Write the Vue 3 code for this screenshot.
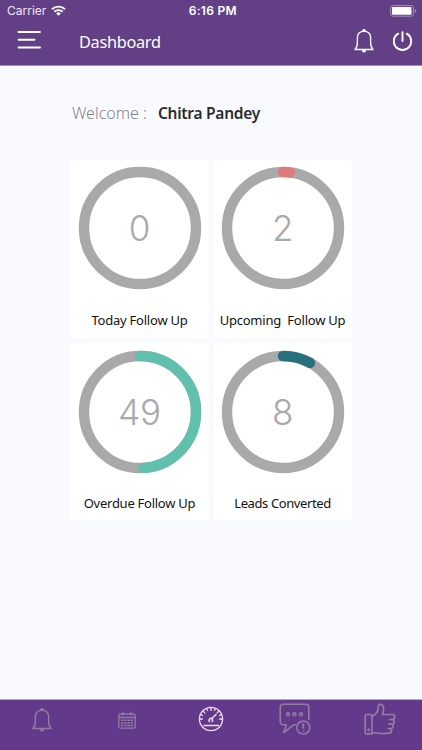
<template>
  <div class="screen">
    <header class="header">
      <div class="status-bar">
        <div class="carrier">
          <span class="carrier-name">Carrier</span>
          <svg class="wifi" width="15" height="11" viewBox="0 0 15 11">
            <path d="M1 4.2a9.4 9.4 0 0 1 13 0M3.4 6.7a6 6 0 0 1 8.2 0" fill="none" stroke="#fff" stroke-width="1.9" />
            <path d="M5.2 8.4a3.4 3.4 0 0 1 4.6 0L7.5 10.8z" fill="#fff" />
          </svg>
        </div>
        <span class="time">6:16 PM</span>
        <svg class="battery" width="27" height="12" viewBox="0 0 27 12">
          <rect x="0.6" y="0.6" width="22.8" height="10.6" rx="2.4" fill="none" stroke="#a58fbd" stroke-width="1" />
          <rect x="2" y="2" width="19.5" height="7.8" rx="1" fill="#fff" />
          <path d="M24.8 4v4q1.600-.6 1.600-2t-1.600-2z" fill="#a58fbd" />
        </svg>
      </div>
      <div class="nav-bar">
        <svg class="menu" width="24" height="20" viewBox="0 0 24 20">
          <path d="M1.500 2h21.500M1.500 9.800h16M1.500 17.500h21.500" stroke="#fff" stroke-width="1.900" stroke-linecap="round" />
        </svg>
        <h1>Dashboard</h1>
        <svg class="bell" width="20" height="25" viewBox="0 0 20 25">
          <path :d="bellPath" fill="none" stroke="#fff" stroke-width="1.3" stroke-linejoin="round" />
          <path :d="bellEnds" fill="#fff" />
        </svg>
        <svg class="power" width="20" height="20" viewBox="0 0 20 20">
          <path d="M5.200 2.700A8.700 8.700 0 1 0 13.800 2.700M9.500 1.100v9" fill="none" stroke="#fff" stroke-width="1.900" stroke-linecap="round" />
        </svg>
      </div>
    </header>

    <main class="content">
      <p class="welcome">
        <span class="greeting">Welcome :</span>
        <span class="user">Chitra Pandey</span>
      </p>
      <div class="cards">
        <div v-for="card in cards" :key="card.label" class="card">
          <div class="gauge">
            <svg width="124" height="124" viewBox="0 0 124 124">
              <circle cx="62" cy="62" r="56" fill="none" stroke="#a9a9a9" stroke-width="10.400" />
              <circle
                v-if="card.value > 0"
                cx="62"
                cy="62"
                r="56"
                fill="none"
                :stroke="card.color"
                stroke-width="10.400"
                stroke-linecap="round"
                pathLength="100"
                :stroke-dasharray="card.value + ' 100'"
                transform="rotate(-90 62 62)"
              />
            </svg>
            <span class="value">{{ card.value }}</span>
          </div>
          <span class="label" :class="card.size">{{ card.label }}</span>
        </div>
      </div>
    </main>

    <nav class="tab-bar">
      <a class="tab">
        <svg class="tab-bell" width="20" height="25" viewBox="0 0 20 25">
          <path :d="bellPath" fill="none" stroke="currentColor" stroke-width="1.4" stroke-linejoin="round" />
          <path :d="bellEnds" fill="currentColor" />
        </svg>
      </a>
      <a class="tab">
        <svg class="tab-calendar" width="18" height="18" viewBox="0 0 18 18">
          <g fill="none" stroke="currentColor" stroke-width="1.3">
            <rect x="0.800" y="3" width="16.400" height="14.200" rx="2" />
            <path d="M1 6.500h16M5 .5v4M13 .5v4" />
            <path d="M3 9.200h12M3 11.900h12M3 14.600h12" stroke-width="1.500" stroke-dasharray="2.400 .8" />
          </g>
        </svg>
      </a>
      <a class="tab active">
        <svg class="tab-gauge" width="26" height="26" viewBox="0 0 26 26">
          <g fill="none" stroke="currentColor" stroke-width="1.300" stroke-linecap="round">
            <circle cx="13" cy="13" r="11.600" />
            <path d="M6 19.500h14.500M1.800 13h2.600M21.600 13h2.600M13 1.800v2.600M5.100 5.100l1.700 1.700M20.900 5.100l-1.700 1.700M2.700 8.700l1.800.8M23.300 8.700l-1.800.8M8.700 2.700l.7 1.600M17.300 2.700l-.7 1.600" />
            <path d="M11.500 15.500a1.800 1.800 0 1 1 2.600 0M14 12.600l4-4.200" stroke-width="1.500" />
          </g>
        </svg>
      </a>
      <a class="tab">
        <svg class="tab-chat" width="32" height="32" viewBox="0 0 32 32">
          <g fill="none" stroke="currentColor" stroke-width="1.600" stroke-linejoin="round">
            <path d="M17 21.700h-2L4.800 29.500l2.500-7.800H4.500a3.300 3.300 0 0 1-3.300-3.300V4.500a3.300 3.300 0 0 1 3.300-3.300h22a3.300 3.300 0 0 1 3.300 3.300v12.500" />
            <circle cx="9" cy="11.300" r="1.500" />
            <circle cx="15.500" cy="11.300" r="1.500" />
            <circle cx="22" cy="11.300" r="1.500" />
            <circle cx="24.300" cy="24.500" r="6.500" />
            <path d="M24.300 20.300v5.200M24.300 27.200v1.400" stroke-width="1.700" />
          </g>
        </svg>
      </a>
      <a class="tab">
        <svg class="tab-like" width="32" height="32" viewBox="0 0 32 32">
          <g fill="none" stroke="currentColor" stroke-width="1.700" stroke-linejoin="round" stroke-linecap="round">
            <path d="M2.500 11.500h4.300q1.200 0 1.200 1.200v18.100H2.500q-1.300 0-1.300-1.300V12.800q0-1.300 1.300-1.300z" />
            <path d="M8 13.500c4-2 6.200-5.200 6.200-8.500V3.500c0-3 4.500-3 5.200.5.500 2.500 0 5-.9 7.500h9.700c3.400 0 3.400 4.700.3 5 2.500.7 2.200 4.500-.7 4.700 2 .8 1.700 4.300-.9 4.500 1.300 1.500.6 4.300-1.600 4.500-5 .6-11.300.4-17.300-.7" />
            <path d="M25.500 16.500h3M25 21.200h2.800M24.500 25.700h2.400" />
            <circle cx="4.700" cy="27" r="0.600" />
          </g>
        </svg>
      </a>
    </nav>
  </div>
</template>

<script setup>
const bellPath = 'M1 21.500C3 19.500 3.400 17.500 3.400 14V9.800C3.400 5.800 6 3.400 10 3.400S16.600 5.800 16.600 9.800V14C16.600 17.500 17 19.500 19 21.500Z'
const bellEnds = 'M7.800 3.600a2.200 2.500 0 1 1 4.400 0zM7.700 22.300h4.600q-.4 2.200-2.300 2.200t-2.300-2.200z'

const cards = [
  { value: 0, label: 'Today Follow Up', color: '#a9a9a9', size: 'today' },
  { value: 2, label: 'Upcoming  Follow Up', color: '#dc7b7e', size: 'upcoming' },
  { value: 49, label: 'Overdue Follow Up', color: '#61bfae', size: 'overdue' },
  { value: 8, label: 'Leads Converted', color: '#27717e', size: 'leads' }
]
</script>

<style>
body {
  margin: 0;
}
</style>

<style scoped>
.screen {
  width: 422px;
  height: 750px;
  display: flex;
  flex-direction: column;
  overflow: hidden;
  background: #f9faff;
  font-family: "Noto Sans", "Open Sans", sans-serif;
}

svg {
  display: block;
  flex-shrink: 0;
}

.header {
  box-sizing: border-box;
  height: 66px;
  background: #634086;
  border-bottom: 1px solid #a48dbd;
  color: #fff;
}

.status-bar {
  display: grid;
  grid-template-columns: 1fr auto 1fr;
  align-items: center;
  height: 21px;
  padding: 0 5px 0 7px;
  font-family: Inter, sans-serif;
  font-size: 12px;
}

.carrier {
  display: flex;
  align-items: center;
  gap: 4.5px;
}

.carrier-name {
  color: #eee8f4;
}

.time {
  padding-left: 1.5px;
  font-weight: 600;
  letter-spacing: 0.3px;
}

.battery {
  justify-self: end;
}

.nav-bar {
  display: flex;
  align-items: center;
  height: 38px;
  padding: 0 9px 0 17px;
}

.nav-bar h1 {
  flex: 1;
  margin: 3px 0 0 38px;
  font-size: 16.3px;
  font-weight: 400;
  letter-spacing: -0.3px;
}

.power {
  margin: 1px 0 0 19px;
}

.content {
  flex: 1;
  padding: 35px 70px 0;
}

.welcome {
  display: flex;
  align-items: center;
  gap: 11px;
  height: 24px;
  margin: 0 0 34px 2px;
  font-size: 16px;
  white-space: nowrap;
}

.greeting {
  color: #858589;
  font-weight: 300;
}

.user {
  color: #2b2b2e;
  font-size: 15.5px;
  font-weight: 600;
  letter-spacing: -0.26px;
}

.cards {
  display: grid;
  grid-template-columns: 138px 138px;
  column-gap: 5px;
  row-gap: 5px;
  padding-left: 0.5px;
}

.card {
  box-sizing: border-box;
  display: flex;
  flex-direction: column;
  align-items: center;
  height: 178.5px;
  padding-top: 7px;
  background: #fff;
}

.gauge {
  display: grid;
  place-items: center;
}

.gauge > * {
  grid-area: 1 / 1;
}

.value {
  color: #a9a9a9;
  font-family: Inter, sans-serif;
  font-size: 35px;
  font-weight: 300;
  letter-spacing: -0.3px;
}

.label {
  margin-top: 20.5px;
  color: #111;
  font-size: 13px;
  line-height: 18px;
  letter-spacing: -0.22px;
  white-space: pre;
}

.label.leads {
  letter-spacing: -0.4px;
}

.label.overdue {
  letter-spacing: -0.26px;
}

.tab-bar {
  box-sizing: border-box;
  display: grid;
  grid-template-columns: repeat(5, 1fr);
  height: 51px;
  border-top: 1px solid #b5a3c8;
  background: #633a8b;
}

.tab {
  display: flex;
  justify-content: center;
  align-items: flex-start;
  color: #917d9f;
}

.tab.active {
  color: #f0dcf4;
}

.tab-bell {
  margin-top: 7px;
}

.tab-calendar {
  margin-top: 11px;
}

.tab-gauge {
  margin-top: 6px;
}

.tab-chat,
.tab-like {
  margin-top: 3px;
}
</style>
